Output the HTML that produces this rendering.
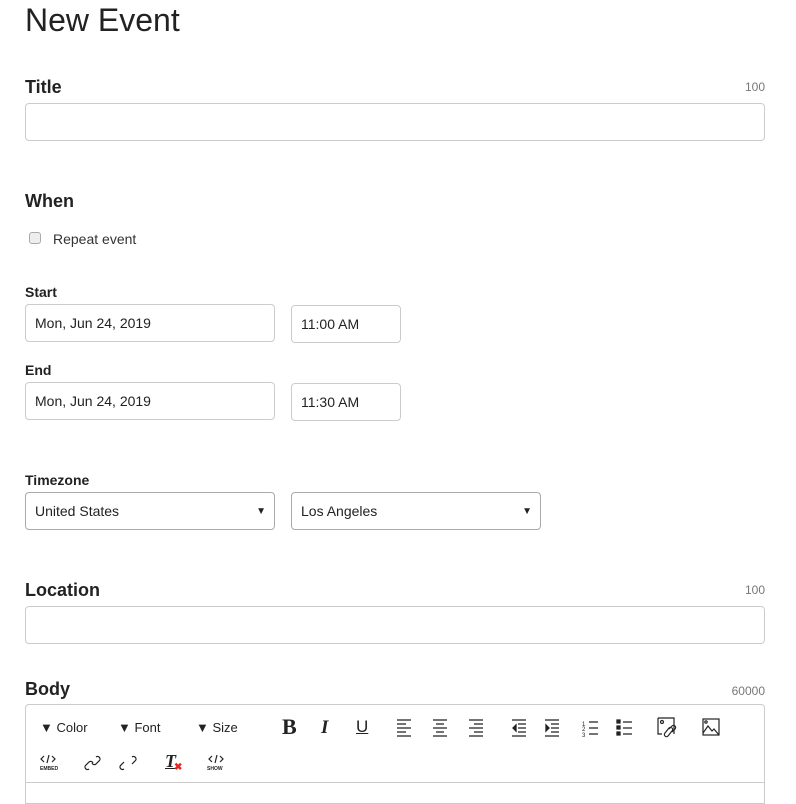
<!DOCTYPE html>
<html><head><meta charset="utf-8"><style>
*{box-sizing:border-box;margin:0;padding:0}
body{width:796px;height:795px;overflow:hidden;background:#fff;font-family:"Liberation Sans",sans-serif;color:#222;position:relative}
.a{position:absolute;white-space:nowrap}
.h{font-weight:bold;font-size:18px}
.l{font-weight:bold;font-size:14px}
.c{font-size:12px;color:#777;text-align:right}
.in{position:absolute;border:1px solid #ccc;border-radius:4px;background:#fff;font-size:14px;padding-left:9px;display:flex;align-items:center}
.sel{justify-content:space-between;padding-right:8px;border-color:#aaa}
.sel span.t{font-size:10px}
.tb{position:absolute;font-size:13px;color:#222}
.ic{position:absolute}
</style></head><body>
<div class="a" style="left:25px;top:2px;font-size:32px;font-weight:300;color:#222">New Event</div>

<div class="a h" style="left:25px;top:77px">Title</div>
<div class="a c" style="right:31px;top:80px">100</div>
<div class="in" style="left:25px;top:103px;width:740px;height:38px"></div>

<div class="a h" style="left:25px;top:191px">When</div>
<div class="a" style="left:29px;top:232px;width:12px;height:12px;border:1px solid #aaa;border-radius:3px;background:#eee"></div>
<div class="a" style="left:53px;top:231px;font-size:14px;color:#333">Repeat event</div>

<div class="a l" style="left:25px;top:284px">Start</div>
<div class="in" style="left:25px;top:304px;width:250px;height:38px">Mon, Jun 24, 2019</div>
<div class="in" style="left:291px;top:305px;width:110px;height:38px">11:00 AM</div>
<div class="a l" style="left:25px;top:362px">End</div>
<div class="in" style="left:25px;top:382px;width:250px;height:38px">Mon, Jun 24, 2019</div>
<div class="in" style="left:291px;top:383px;width:110px;height:38px">11:30 AM</div>

<div class="a l" style="left:25px;top:472px">Timezone</div>
<div class="in sel" style="left:25px;top:492px;width:250px;height:38px"><span>United States</span><span class="t">▼</span></div>
<div class="in sel" style="left:291px;top:492px;width:250px;height:38px"><span>Los Angeles</span><span class="t">▼</span></div>

<div class="a h" style="left:25px;top:580px">Location</div>
<div class="a c" style="right:31px;top:583px">100</div>
<div class="in" style="left:25px;top:606px;width:740px;height:38px"></div>

<div class="a h" style="left:25px;top:679px">Body</div>
<div class="a c" style="right:31px;top:684px">60000</div>
<div class="a" style="left:25px;top:704px;width:740px;height:100px;border:1px solid #ccc;border-radius:4px 4px 0 0"></div>
<div class="a" style="left:26px;top:782px;width:738px;height:1px;background:#ccc"></div>

<div class="tb" style="left:40px;top:720px">▼ Color</div>
<div class="tb" style="left:118px;top:720px">▼ Font</div>
<div class="tb" style="left:196px;top:720px">▼ Size</div>
<div class="tb" style="left:282px;top:714px;font-family:'Liberation Serif',serif;font-weight:bold;font-size:22px">B</div>
<div class="tb" style="left:321px;top:717px;font-family:'Liberation Serif',serif;font-style:italic;font-weight:bold;font-size:19px">I</div>
<div class="tb" style="left:356px;top:717px;font-size:17px;text-decoration:underline">U</div>
<svg class="ic" style="left:395px;top:718px" width="240" height="20" stroke="#222" stroke-width="1.3" fill="none">
<path d="M2 2h14M2 6h9M2 10h14M2 14h9M2 18h14"/>
<path d="M38 2h14M41 6h8M38 10h14M41 14h8M38 18h14"/>
<path d="M74 2h14M79 6h9M74 10h14M79 14h9M74 18h14"/>
<path d="M117 2h14M123 6h8M123 10h8M123 14h8M117 18h14"/><path d="M121 7l-3 3 3 3z" fill="#222"/>
<path d="M150 2h14M156 6h8M156 10h8M156 14h8M150 18h14"/><path d="M151 7l3 3-3 3z" fill="#222"/>
<path d="M194 4h9M194 10h9M194 16h9"/>
<text x="187" y="8" font-size="6" fill="#222" stroke="none">1</text><text x="187" y="13" font-size="6" fill="#222" stroke="none">2</text><text x="187" y="19" font-size="6" fill="#222" stroke="none">3</text>
<path d="M228 4h9M228 10h9M228 16h9"/><path d="M222 2h3v3h-3zM222 8h3v3h-3zM222 14h3v3h-3z" fill="#222"/>
</svg>
<svg class="ic" style="left:657px;top:717px" width="66" height="22" stroke="#222" stroke-width="1.2" fill="none">
<path d="M1 1h16v16M1 1v16h4"/><circle cx="5" cy="5" r="1.5"/><path d="M8 16l4-5a2 2 0 013 3l-4 5a2 2 0 01-3-3M12 12l3-3a2 2 0 013 3l-3 3"/>
<rect x="46" y="2" width="16" height="16"/><circle cx="49" cy="5" r="1.2"/><path d="M46 16l5-7 4 5 2-2 5 6"/>
</svg>
<svg class="ic" style="left:38px;top:753px" width="190" height="24" stroke="#222" stroke-width="1.2" fill="none">
<path d="M6 3l-3 3 3 3M14 3l3 3-3 3M11 2l-2 8"/><text x="2" y="17" font-size="5" font-weight="bold" fill="#222" stroke="none">EMBED</text>
<path d="M51 16a2.5 2.5 0 01-3-4l3-3a2.5 2.5 0 014 1M58 4a2.5 2.5 0 013 4l-3 3a2.5 2.5 0 01-4-1"/>
<path d="M86 16a2.5 2.5 0 01-3-4l3-3M94 4a2.5 2.5 0 013 4l-3 3"/>
<path d="M174 3l-3 3 3 3M182 3l3 3-3 3M179 2l-2 8"/><text x="169" y="17" font-size="5" font-weight="bold" fill="#222" stroke="none">SHOW</text>
</svg>
<div class="tb" style="left:165px;top:751px;font-family:'Liberation Serif',serif;font-style:italic;font-weight:bold;font-size:18px;text-decoration:underline">T</div>
<div class="tb" style="left:174px;top:762px;color:#e22;font-size:10px;font-weight:bold">✖</div>
</body></html>
